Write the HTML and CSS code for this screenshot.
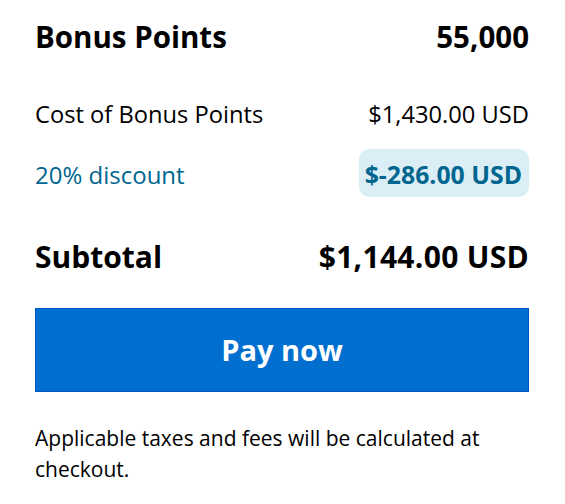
FILE: index.html
```html
<!DOCTYPE html>
<html lang="en">
<head>
  <meta charset="UTF-8">
  <meta name="viewport" content="width=device-width, initial-scale=1.0">
  <title>Bonus Points</title>
  <link rel="stylesheet" href="styles.css">
</head>
<body>

<div class="summary">
  <div class="row row-title">
    <span>Bonus Points</span>
    <span>55,000</span>
  </div>

  <div class="row row-cost">
    <span>Cost of Bonus Points</span>
    <span>$1,430.00 USD</span>
  </div>

  <div class="row row-discount">
    <span>20% discount</span>
    <span class="badge">$-286.00 USD</span>
  </div>

  <div class="row row-subtotal">
    <span>Subtotal</span>
    <span class="total">$1,144.00 USD</span>
  </div>

  <button type="button" class="pay-button">Pay now</button>

  <p class="note">Applicable taxes and fees will be calculated at checkout.</p>
</div>

</body>
</html>
```

FILE: styles.css
```css
body {
  font-family: "Open Sans", "Liberation Sans", sans-serif;
  background-color: #fff;
  color: #000;
  margin: 0;
  padding: 0;
}

.summary {
  display: flex;
  flex-direction: column;
  padding: 19px 36px 0 35px;
}

.row {
  display: flex;
  justify-content: space-between;
  align-items: center;
  line-height: 1.2;
}

.row-title {
  font-size: 29.5px;
  font-weight: 700;
}

.row-cost {
  font-size: 23.7px;
  margin-top: 46px;
}

.row-discount {
  font-size: 24px;
  color: #00668f;
  margin-top: 20px;
  align-items: baseline;
}

.badge {
  background-color: #dceef5;
  font-weight: 700;
  font-size: 24.8px;
  line-height: 28px;
  padding: 11px 7px 9px 6px;
  border-radius: 10px;
}

.row-subtotal {
  font-size: 30px;
  font-weight: 700;
  margin-top: 42px;
}

.total {
  letter-spacing: 0.3px;
}

.pay-button {
  margin-top: 33px;
  height: 84px;
  background-color: #006fcf;
  border: 1px solid #0056c2;
  color: #fff;
  font-family: inherit;
  font-size: 29px;
  font-weight: 700;
  cursor: pointer;
}

.note {
  margin: 31px 0 0 0;
  font-size: 21px;
  line-height: 31px;
}
```
